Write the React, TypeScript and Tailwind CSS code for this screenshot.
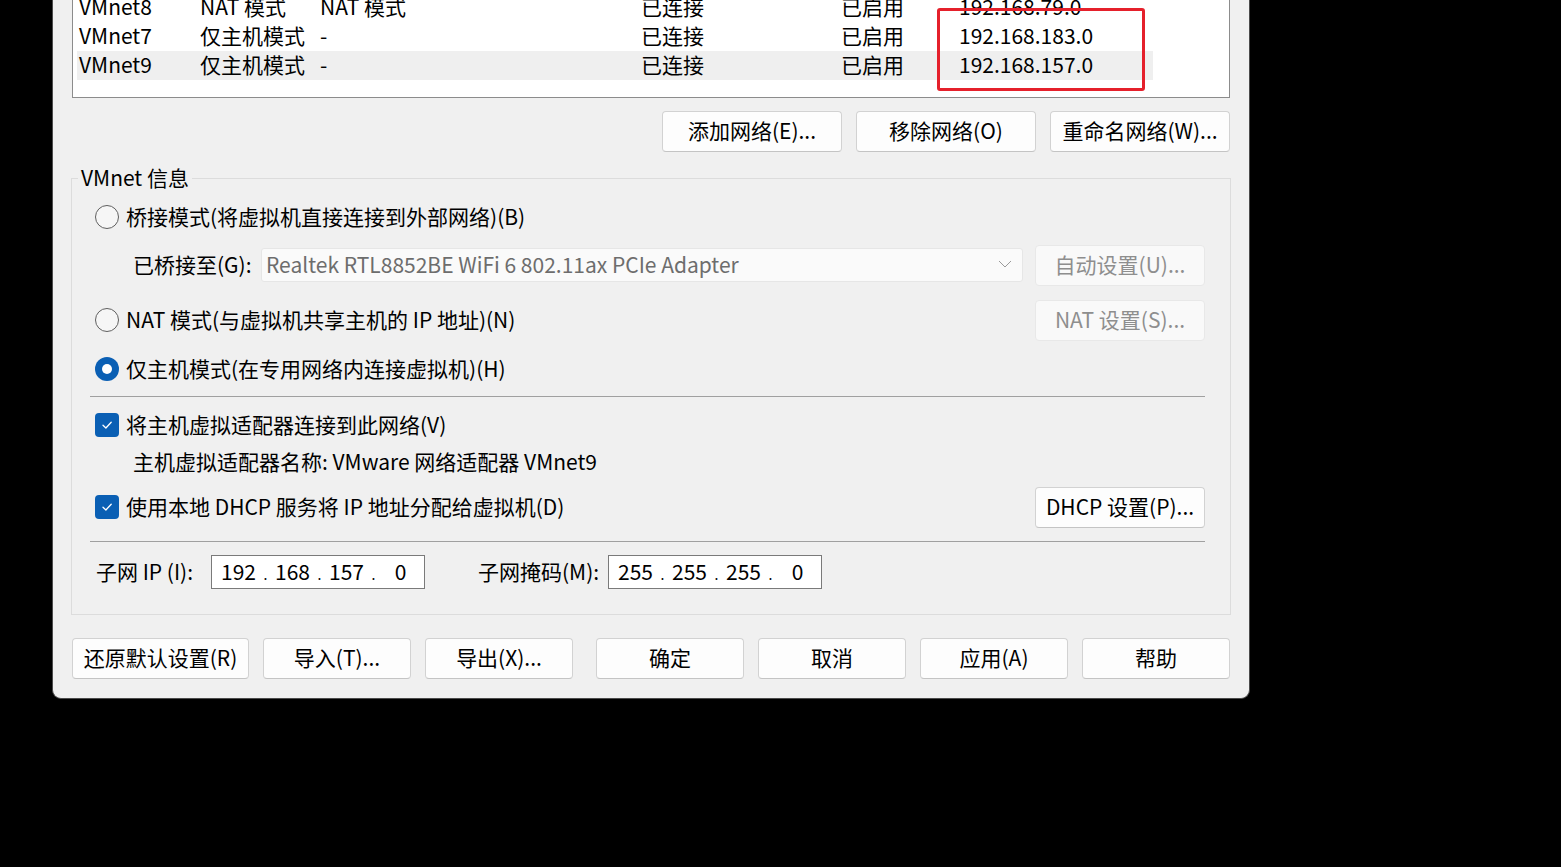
import React from "react";

const rows = [
  ["VMnet8", "NAT 模式", "NAT 模式", "已连接", "已启用", "192.168.79.0"],
  ["VMnet7", "仅主机模式", "-", "已连接", "已启用", "192.168.183.0"],
  ["VMnet9", "仅主机模式", "-", "已连接", "已启用", "192.168.157.0"],
];

function Btn({ children, w, disabled }: { children: React.ReactNode; w: string; disabled?: boolean }) {
  return (
    <div
      className={
        "h-[41px] shrink-0 flex items-center justify-center rounded-[4px] border pb-[2px] " +
        w +
        (disabled
          ? " bg-[#f9f9f9] border-[#e8e8e8] text-[#8e8e8e]"
          : " bg-[#fdfdfd] border-[#d2d2d2] border-b-[#c4c4c4] text-black")
      }
    >
      {children}
    </div>
  );
}

function Radio({ checked }: { checked?: boolean }) {
  return checked ? (
    <div className="ml-[5px] w-[24px] h-[24px] rounded-full bg-[#0a5fb4] flex items-center justify-center shrink-0">
      <div className="w-[10px] h-[10px] rounded-full bg-white" />
    </div>
  ) : (
    <div className="ml-[5px] w-[24px] h-[24px] rounded-full border border-[#5f5f5f] bg-[#f6f6f6] shrink-0" />
  );
}

function Check() {
  return (
    <div className="ml-[5px] w-[24px] h-[24px] rounded-[4px] bg-[#0a5fb4] flex items-center justify-center shrink-0">
      <svg width="14" height="14" viewBox="0 0 14 14" fill="none">
        <path d="M3 7.2 L5.9 10 L11.2 4.2" stroke="white" strokeWidth="1.3" strokeLinecap="round" strokeLinejoin="round" />
      </svg>
    </div>
  );
}

function IpBox({ parts }: { parts: string[] }) {
  return (
    <div className="w-[214px] h-[34px] shrink-0 bg-white border border-[#7a7a7a] flex items-center pl-[4px] pb-[2px]">
      {parts.map((p, i) => (
        <React.Fragment key={i}>
          {i > 0 && <span className="w-[9px] text-center text-[14px] self-end pb-[5px]">.</span>}
          <span className="w-[45px] text-center">{p}</span>
        </React.Fragment>
      ))}
    </div>
  );
}

export default function App() {
  return (
    <div className="min-h-[867px] bg-black text-[21px] leading-none text-black font-['Noto_Sans_CJK_SC','Noto_Sans',sans-serif]">
      <div className="relative ml-[52px] w-[1198px] h-[699px] bg-[#f0f0f0] border-x border-b border-[#4b4b4b] rounded-b-[9px] px-[19px] flex flex-col overflow-hidden">
        {/* list */}
        <div className="-mt-[12px] h-[110px] shrink-0 border border-[#8c8c8c] bg-white pl-[4px] pt-[4px]">
          {rows.map((r, i) => (
            <div
              key={i}
              className={
                "w-[1076px] h-[29px] flex items-center pl-[2px] pb-[2px] " + (i === 2 ? "bg-[#efefef]" : "")
              }
            >
              <span className="w-[121px]">{r[0]}</span>
              <span className="w-[120px]">{r[1]}</span>
              <span className="w-[321px]">{r[2]}</span>
              <span className="w-[200px]">{r[3]}</span>
              <span className="w-[118px]">{r[4]}</span>
              <span>{r[5]}</span>
            </div>
          ))}
        </div>

        {/* list buttons */}
        <div className="mt-[13px] flex justify-end gap-[14px]">
          <Btn w="w-[180px]">添加网络(E)...</Btn>
          <Btn w="w-[180px]">移除网络(O)</Btn>
          <Btn w="w-[180px]">重命名网络(W)...</Btn>
        </div>

        {/* group */}
        <div className="relative mt-[26px] -mx-[1px] border border-[#dcdcdc] pl-[18px] pr-[25px] pt-[18px] pb-[25px]">
          <div className="absolute left-[6px] -top-[14px] bg-[#f0f0f0] px-[3px] leading-[24px]">VMnet 信息</div>

          <div className="h-[40px] flex items-center">
            <Radio />
            <span className="ml-[7px] pb-[2px]">桥接模式(将虚拟机直接连接到外部网络)(B)</span>
          </div>

          <div className="mt-[8px] h-[40px] flex items-center">
            <span className="ml-[43px] w-[128px] shrink-0 pb-[2px]">已桥接至(G):</span>
            <div className="w-[762px] h-[34px] shrink-0 bg-[#fafafa] border border-[#e6e6e6] rounded-[3px] flex items-center pl-[4px] pr-[10px] pb-[2px] text-[#6d6d6d]">
              <span className="flex-1">Realtek RTL8852BE WiFi 6 802.11ax PCIe Adapter</span>
              <svg width="14" height="8" viewBox="0 0 14 8" fill="none">
                <path d="M1 1 L7 7 L13 1" stroke="#9a9a9a" strokeWidth="1" />
              </svg>
            </div>
            <div className="ml-auto">
              <Btn w="w-[170px]" disabled>自动设置(U)...</Btn>
            </div>
          </div>

          <div className="mt-[15px] h-[40px] flex items-center">
            <Radio />
            <span className="ml-[7px] pb-[2px]">NAT 模式(与虚拟机共享主机的 IP 地址)(N)</span>
            <div className="ml-auto">
              <Btn w="w-[170px]" disabled>NAT 设置(S)...</Btn>
            </div>
          </div>

          <div className="mt-[9px] h-[40px] flex items-center">
            <Radio checked />
            <span className="ml-[7px] pb-[2px]">仅主机模式(在专用网络内连接虚拟机)(H)</span>
          </div>

          <div className="mt-[7px] h-px bg-[#a0a0a0]" />

          <div className="mt-[8px] h-[40px] flex items-center">
            <Check />
            <span className="ml-[7px] pb-[2px]">将主机虚拟适配器连接到此网络(V)</span>
          </div>

          <div className="h-[34px] flex items-center">
            <span className="ml-[43px] pb-[2px]">主机虚拟适配器名称: VMware 网络适配器 VMnet9</span>
          </div>

          <div className="mt-[8px] h-[40px] flex items-center">
            <Check />
            <span className="ml-[7px] pb-[2px]">使用本地 DHCP 服务将 IP 地址分配给虚拟机(D)</span>
            <div className="ml-auto">
              <Btn w="w-[170px]">DHCP 设置(P)...</Btn>
            </div>
          </div>

          <div className="mt-[14px] h-px bg-[#a0a0a0]" />

          <div className="mt-[13px] h-[34px] flex items-center">
            <span className="ml-[6px] w-[115px] shrink-0 pb-[2px]">子网 IP (I):</span>
            <IpBox parts={["192", "168", "157", "0"]} />
            <span className="ml-[53px] w-[130px] shrink-0 pb-[2px]">子网掩码(M):</span>
            <IpBox parts={["255", "255", "255", "0"]} />
          </div>
        </div>

        {/* bottom buttons */}
        <div className="mt-[23px] flex justify-between">
          <div className="flex gap-[14px]">
            <Btn w="w-[177px]">还原默认设置(R)</Btn>
            <Btn w="w-[148px]">导入(T)...</Btn>
            <Btn w="w-[148px]">导出(X)...</Btn>
          </div>
          <div className="flex gap-[14px]">
            <Btn w="w-[148px]">确定</Btn>
            <Btn w="w-[148px]">取消</Btn>
            <Btn w="w-[148px]">应用(A)</Btn>
            <Btn w="w-[148px]">帮助</Btn>
          </div>
        </div>

        {/* annotation */}
        <div className="absolute left-[884px] top-[8px] w-[208px] h-[83px] border-[3px] border-[#e5202b] rounded-[3px]" />
      </div>
    </div>
  );
}
